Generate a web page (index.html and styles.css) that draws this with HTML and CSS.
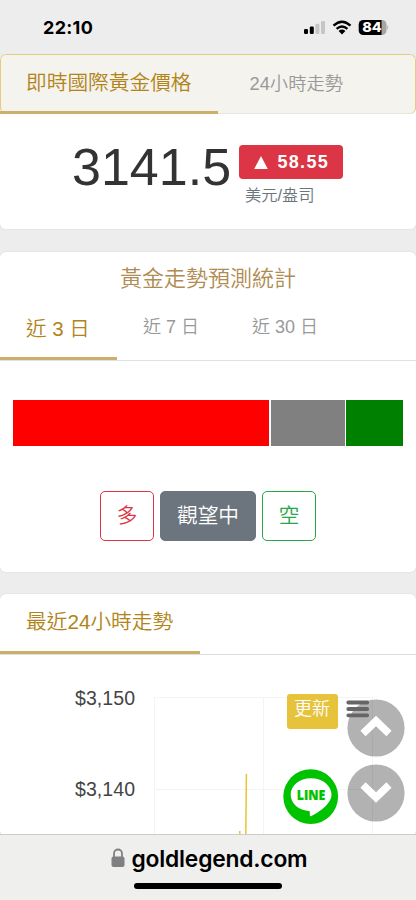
FILE: index.html
```html
<!DOCTYPE html>
<html lang="zh-Hant">
<head>
<meta charset="utf-8">
<meta name="viewport" content="width=device-width, initial-scale=1">
<title>goldlegend.com</title>
<link rel="stylesheet" href="styles.css">
</head>
<body>
<div class="screen">
  <header class="status">
    <span class="clock">22:10</span>
    <svg class="status-icons" width="86" height="18" viewBox="0 0 86 18">
      <rect x="0" y="9" width="4" height="5" rx="1.2"/>
      <rect x="5.8" y="6.6" width="4" height="7.4" rx="1.2"/>
      <rect x="11.4" y="3.7" width="4" height="10.3" rx="1.2" fill="#c6c6c6"/>
      <rect x="17" y="1" width="4" height="13" rx="1.2" fill="#c6c6c6"/>
      <g fill="none" stroke="#000" stroke-width="2.3">
        <path d="M29.5 5.6Q38 -2.2 46.5 5.6"/>
        <path d="M32.6 8.9Q38 4 43.4 8.9"/>
      </g>
      <path d="M34.6 11Q38 8.2 41.4 11L38 14.4Z"/>
      <path d="M77 0h1a4.5 4.5 0 0 1 4.500 4.500v6a4.500 4.500 0 0 1-4.500 4.500h-1z" fill="#a5a5a5"/>
      <path d="M59.200 0H77.500V15H59.200a4.500 4.500 0 0 1-4.500-4.500v-6a4.500 4.500 0 0 1 4.500-4.500z"/>
      <path d="M83.300 5q2 2.500 0 5z" fill="#a5a5a5"/>
      <text class="battery" x="58.300" y="12.400" textLength="19.500" lengthAdjust="spacingAndGlyphs">84</text>
    </svg>
  </header>

  <main>
    <section class="card price-card">
      <nav class="tabs tinted">
        <a class="tab active">即時國際黃金價格</a>
        <a class="tab">24小時走勢</a>
      </nav>
      <div class="quote">
        <span class="price">3141.5</span>
        <div class="change">
          <span class="badge"><svg width="14" height="13" viewBox="0 0 14 13"><path d="M7 0L13.800 13H0.200Z" fill="#fff"/></svg>58.55</span>
          <span class="unit">美元/盎司</span>
        </div>
      </div>
    </section>

    <section class="card forecast-card">
      <h2>黃金走勢預測統計</h2>
      <nav class="tabs periods">
        <a class="tab active">近 3 日</a>
        <a class="tab">近 7 日</a>
        <a class="tab">近 30 日</a>
      </nav>
      <div class="ratio"><i class="up"></i><i class="flat"></i><i class="down"></i></div>
      <div class="votes">
        <button class="vote long">多</button>
        <button class="vote wait">觀望中</button>
        <button class="vote short">空</button>
      </div>
    </section>

    <section class="card trend-card">
      <nav class="tabs trend-tabs"><a class="tab active">最近24小時走勢</a></nav>
      <svg class="chart" width="416" height="179" viewBox="0 655 416 179">
        <path d="M154 697.500H372M154 789.500H372M154.500 697V834M263.500 697V834M372.500 697V834" stroke="#f4f4f4" fill="none"/>
        <path d="M239.800 834V831M245.800 834L246.400 774" stroke="#ecc32e" stroke-width="1.500" fill="none"/>
        <text x="75" y="704.500" textLength="60">$3,150</text>
        <text x="75" y="795.500" textLength="60">$3,140</text>
      </svg>
    </section>
  </main>

  <button class="refresh">更新</button>
  <svg class="line-badge" width="56" height="56" viewBox="0 0 56 56">
    <circle cx="27.700" cy="27.600" r="27.400" fill="#00c300"/>
    <path d="M28 9.300C39.500 9.300 48.500 16.500 48.500 25.600C48.500 30 46.300 33.500 42.500 37.200C38 41.500 31.500 45.500 28 47.200C26.300 48 27 45.500 26.800 42.200C15.500 41.600 7.700 34.500 7.700 25.600C7.700 16.500 16.500 9.300 28 9.300Z" fill="#fff"/>
    <text x="13.800" y="31" textLength="28.500" lengthAdjust="spacingAndGlyphs">LINE</text>
  </svg>
  <div class="scrollers">
    <svg width="58" height="58" viewBox="0 0 58 58"><circle cx="29" cy="29" r="28.600"/><path d="M16 34.500L29 22L42 34.500"/></svg>
    <svg width="58" height="58" viewBox="0 0 58 58"><circle cx="29" cy="29" r="28.600"/><path d="M16 21L29 33.500L42 21"/></svg>
  </div>
  <svg class="menu" width="24" height="18" viewBox="0 0 24 18"><path d="M2.300 2.500H21.200M2.300 9H21.200M2.300 15.300H21.200"/></svg>

  <footer class="browser-bar">
    <div class="address">
      <svg width="14" height="20" viewBox="0 0 14 20"><path d="M3 9V5.500a4 4 0 0 1 8 0V9" fill="none" stroke="#808083" stroke-width="1.800"/><rect x="0.500" y="8.500" width="13" height="10.500" rx="2" fill="#808083"/></svg>
      <span>goldlegend.com</span>
    </div>
    <div class="home"></div>
  </footer>
</div>
</body>
</html>
```
FILE: styles.css
```css
* { box-sizing: border-box; }
body {
  margin: 0;
  font-family: "Liberation Sans", "Noto Sans CJK TC", sans-serif;
  font-weight: 350;
  background: #ededed;
}
.screen {
  position: relative;
  display: flex;
  flex-direction: column;
  width: 416px;
  height: 900px;
  overflow: hidden;
}
.status {
  display: flex;
  justify-content: space-between;
  height: 54px;
  padding: 20px 29px 0 43px;
  flex: none;
}
.clock { font: 700 18px/16px Inter, sans-serif; letter-spacing: 0.300px; }
.status-icons { width: 86px; margin-right: -3px; }
.battery { font: 800 13.500px Inter, sans-serif; fill: #fff; }
main {
  display: flex;
  flex-direction: column;
  gap: 22px;
  height: 780px;
  overflow: hidden;
}
.card {
  flex: none;
  background: #fff;
  border-radius: 6px;
  overflow: hidden;
  box-shadow: 0 0 0 1px #e4e5e7;
}
.price-card { height: 175px; margin-bottom: 1px; }
.forecast-card { height: 320px; }
.trend-card { height: 242px; }
.tabs { display: flex; }
.tab {
  padding: 0 26px;
  font-size: 18.300px;
  line-height: 57px;
  color: #999;
  white-space: nowrap;
}
.tab.active {
  font-size: 20.700px;
  line-height: 56px;
  color: #b08419;
  border-bottom: 3px solid #cbb069;
}
.tinted {
  height: 60px;
  background: #f5f3ee;
  border: solid #e5cb80;
  border-width: 1px 1px 0;
  border-radius: 6px;
  box-shadow: inset 0 -1px #e8e7e3;
}
.tinted .tab { padding-left: 32px; }
.tinted .tab.active { margin-left: -1px; padding-left: 26px; line-height: 56px; height: 59px; }
.quote {
  display: flex;
  gap: 7px;
  padding: 30px 0 0 72px;
}
.price {
  width: 160px;
  font-size: 52px;
  line-height: 46px;
  color: #333;
}
.change { display: flex; flex-direction: column; }
.badge {
  display: flex;
  align-items: center;
  gap: 9.500px;
  width: 104px;
  height: 34px;
  margin-top: 0.500px;
  padding: 1px 0 0 15px;
  border-radius: 4px;
  background: #dc3545;
  color: #fff;
  font-size: 18px;
  font-weight: 700;
  letter-spacing: 1.300px;
}
.unit {
  padding-left: 6px;
  font-size: 16.300px;
  line-height: 32px;
  color: #6c757d;
}
h2 {
  margin: 0;
  height: 49px;
  font-size: 22px;
  font-weight: 350;
  line-height: 54px;
  text-align: center;
  color: #b08b52;
}
.periods { height: 60px; border-bottom: 1px solid #dee2e6; }
.periods .tab { line-height: 52px; font-size: 18px; }
.periods .tab + .tab + .tab { padding-left: 27px; }
.periods .tab.active { width: 117px; font-size: 20.500px; line-height: 56px; height: 59px; padding-right: 0; }
.ratio {
  display: grid;
  grid-template-columns: 256px 74px 57px;
  gap: 1.500px;
  height: 46px;
  margin: 39px 13px 0;
}
.up { background: #f00; }
.flat { background: #808080; }
.down { background: #008000; }
.votes {
  display: flex;
  justify-content: center;
  gap: 6px;
  margin-top: 45px;
}
.vote {
  width: 54px;
  height: 50px;
  padding: 0;
  border: 1.500px solid;
  border-radius: 5px;
  background: #fff;
  font: 350 20.700px/46px "Liberation Sans", "Noto Sans CJK TC", sans-serif;
}
.long { color: #dc3545; }
.wait { width: 96px; background: #6c757d; border-color: #6c757d; color: #fff; }
.short { color: #28a745; }
.trend-tabs { height: 61px; border-bottom: 1px solid #dedede; }
.trend-tabs .tab.active { width: 200px; height: 60px; line-height: 56px; }
.chart { display: block; }
.chart text { font-size: 19.500px; fill: #444; }
.refresh {
  position: absolute;
  left: 287px;
  top: 694px;
  width: 51px;
  height: 35px;
  padding: 0 1px 8px 0;
  border: 0;
  border-radius: 3px;
  background: #e6c33b;
  color: #fff;
  font: 350 18px/27px "Noto Sans CJK TC", sans-serif;
}
.line-badge { position: absolute; left: 283px; top: 769px; }
.line-badge text { font: 800 14px "Open Sans", sans-serif; fill: #00c300; stroke: #00c300; stroke-width: 0.200; }
.scrollers {
  position: absolute;
  left: 347px;
  top: 699px;
  display: flex;
  flex-direction: column;
  gap: 7px;
}
.scrollers circle { fill: #000; opacity: 0.300; }
.scrollers path { fill: none; stroke: #fff; stroke-width: 7.400; }
.menu { position: absolute; left: 346px; top: 700px; }
.menu path { stroke: #666; stroke-width: 3.800; stroke-linecap: round; }
.browser-bar {
  flex: none;
  height: 66px;
  border-top: 1px solid #ccc;
  background: #efefee;
}
.address {
  display: flex;
  justify-content: center;
  align-items: center;
  gap: 7px;
  height: 48px;
  padding: 0 0 2px 2px;
  font: 600 22.800px "Inter", sans-serif;
  letter-spacing: -0.200px;
}
.home { width: 148px; height: 6px; margin: 0 auto; border-radius: 3px; background: #000; }
```
